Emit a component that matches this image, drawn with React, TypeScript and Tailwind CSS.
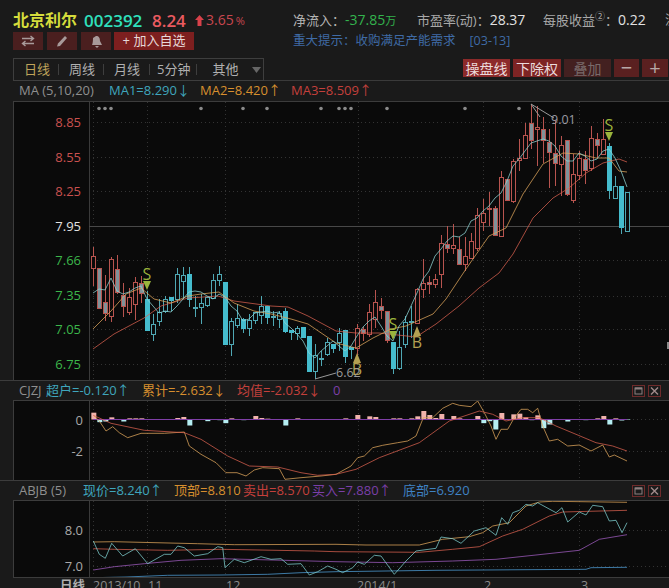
const Z = (a: number[], ox: number, oy: number) => {
  const r: string[] = [];
  for (let i = 0; i < a.length; i += 2) r.push(`${(ox + a[i] / 3).toFixed(1)},${(oy + a[i + 1] / 3).toFixed(1)}`);
  return r.join(" ");
};
const P = (a: number[]) => Z(a.map((v) => v * 3), 0, 0);

type C = [string, number, number, number, number];
const candles: C[] = [
  ["r", 246, 255, 267, 285], ["g", 267, 267, 307, 308], ["g", 274, 301, 312, 320], ["r", 256, 258, 315, 321], ["g", 254, 268, 291, 293],
  ["g", 282, 294, 305, 316], ["r", 287, 296, 311, 314], ["r", 276, 281, 303, 319], ["g", 275, 282, 292, 302], ["c", 290, 298, 329, 329],
  ["h", 313, 323, 333, 340], ["h", 298, 311, 320, 325], ["h", 295, 298, 310, 312], ["c", 296, 296, 299, 310], ["h", 267, 273, 298, 302],
  ["h", 266, 274, 280, 298], ["c", 266, 273, 298, 306], ["h", 295, 306, 307, 316], ["h", 293, 302, 306, 323], ["h", 296, 296, 304, 306],
  ["h", 273, 279, 297, 298], ["h", 265, 273, 279, 285], ["c", 281, 281, 343, 343], ["h", 317, 320, 343, 355], ["h", 303, 317, 324, 327],
  ["c", 317, 318, 327, 332], ["h", 313, 319, 327, 335], ["h", 311, 311, 319, 323], ["h", 295, 305, 314, 323], ["c", 305, 305, 316, 323],
  ["h", 310, 315, 315, 325], ["h", 310, 312, 318, 327], ["c", 307, 310, 330, 332], ["c", 329, 329, 331, 339], ["h", 325, 327, 332, 339],
  ["c", 326, 326, 336, 336], ["c", 335, 335, 370, 370], ["h", 343, 354, 370, 378], ["h", 350, 357, 358, 365], ["h", 337, 341, 353, 355],
  ["c", 343, 343, 347, 352], ["h", 327, 332, 341, 350], ["c", 329, 329, 355, 362], ["c", 346, 346, 348, 358], ["r", 323, 327, 347, 357],
  ["g", 326, 328, 332, 340], ["r", 303, 311, 333, 336], ["r", 289, 301, 318, 327], ["g", 297, 305, 309, 318], ["g", 310, 310, 339, 342],
  ["c", 341, 341, 367, 373], ["h", 330, 346, 367, 369], ["h", 315, 321, 343, 347], ["h", 305, 320, 320, 337], ["r", 287, 288, 322, 323],
  ["r", 258, 282, 288, 297], ["g", 275, 281, 283, 293], ["r", 273, 278, 283, 287], ["r", 234, 242, 273, 287], ["g", 225, 243, 247, 252],
  ["r", 223, 244, 247, 253], ["g", 236, 248, 263, 264], ["r", 236, 255, 263, 270], ["r", 232, 240, 257, 258], ["r", 207, 214, 247, 250],
  ["r", 198, 212, 221, 230], ["r", 191, 207, 208, 225], ["g", 205, 207, 234, 235], ["r", 170, 176, 235, 236], ["g", 178, 178, 199, 200],
  ["r", 158, 160, 200, 202], ["r", 138, 157, 159, 170], ["r", 122, 134, 157, 158], ["g", 103, 122, 139, 148], ["r", 105, 126, 128, 165],
  ["g", 116, 128, 139, 162], ["g", 128, 141, 151, 187], ["g", 119, 152, 162, 185], ["r", 135, 144, 163, 195], ["g", 139, 139, 193, 195],
  ["r", 153, 173, 199, 202], ["r", 150, 157, 174, 179], ["g", 150, 158, 169, 183], ["r", 125, 137, 167, 170], ["g", 132, 138, 144, 157],
  ["r", 118, 138, 153, 154], ["c", 142, 145, 189, 198], ["h", 175, 185, 197, 197], ["c", 185, 185, 226, 233], ["h", 191, 191, 230, 230],
];

const ma1 = [92,292,98,288,104,289,110,277,116,290,122,293,128,291,134,287,140,285,146,298,152,305,158,312,164,310,170,311,176,305,182,298,188,291,194,290,200,291,206,295,212,298,218,293,224,296,230,305,236,310,242,320,248,318,254,312,260,311,266,310,272,312,278,311,284,322,290,327,296,333,302,340,308,352,314,357,320,350,326,345,332,340,338,345,344,350,350,345,356,335,362,326,368,320,374,316,380,325,386,335,392,340,398,325,404,318,410,305,416,292,422,278,428,270,434,255,440,248,446,240,452,235,458,236,464,232,470,220,476,217,482,210,488,205,494,197,500,192,506,180,512,165,518,158,524,150,530,142,536,140,542,138,548,140,554,145,560,155,566,160,572,160,578,152,584,155,590,160,596,158,602,150,608,148,614,157,620,170,626,186];
const ma2 = [92,328,110,310,125,293,140,287,153,298,170,302,187,295,200,293,218,291,233,302,253,310,270,313,290,318,307,323,335,342,355,347,372,337,390,328,405,325,432,313,445,298,465,268,488,235,505,227,522,193,542,163,562,152,578,153,595,157,608,157,618,170,626,171];
const ma3 = [92,348,113,333,143,317,160,305,187,297,217,295,233,300,270,305,287,306,307,315,335,330,355,332,378,332,415,336,435,323,458,305,478,287,498,272,512,253,532,217,552,197,568,187,585,172,602,162,618,158,626,161];

const cjO = Z([277,118,295,135,315,165,335,152,355,170,380,185,420,172,450,172,490,172,550,168,565,210,600,235,645,260,675,290,708,290,735,300,760,282,785,275,835,278,852,310,900,305,960,300,1005,295],0,375) + " " + Z([45,270,65,245,85,240,110,215,140,208,185,200,215,195,240,180,262,125,290,125,320,97,350,82,370,88,405,92,425,75,445,110,465,150,480,190,495,160,515,160,535,125,555,100,575,100,590,110,605,97,620,150,640,195,665,190,695,210,730,207,765,225,800,207,820,243,835,237,873,255],335,375);
const cjR = Z([277,118,330,142,430,163,550,170,600,190,680,240,745,270,830,273,900,290,950,298,1005,295],0,375) + " " + Z([60,280,130,245,250,200,340,135,430,105,470,115,510,135,560,125,610,125,660,150,720,175,780,200,830,210,873,225],335,375);

const barsL: [number, number][] = [[277,110],[295,140],[313,138],[331,124],[367,138],[385,127],[403,127],[421,127],[457,132],[493,132],[529,126],[547,123],[565,150],[583,133],[601,133],[619,137],[637,132],[655,134],[673,143],[691,127],[727,134],[763,120],[781,126],[799,128],[853,150],[889,127],[925,132]];
const barsR: [number, number][] = [[28,127],[64,117],[100,121],[118,123],[172,127],[190,127],[226,127],[244,121],[262,105],[280,117],[298,126],[316,114],[352,120],[370,127],[424,120],[442,143],[460,137],[478,162],[496,111],[514,133],[532,115],[550,113],[568,124],[586,134],[604,118],[622,158],[640,147],[658,132],[676,132],[694,138],[748,134],[766,132],[784,127],[802,120],[820,147],[838,127],[856,135],[874,132]];

const abO = Z([277,498,340,497,590,503,700,506,1005,505],0,375) + " " + Z([90,507,250,507,320,490,400,482,440,470,470,450,520,440,570,390,610,378,650,376,873,379],335,375);
const abR = Z([277,518,340,520,500,523,660,520,940,525,1005,527],0,375) + " " + Z([250,529,350,520,430,512,500,480,560,460,640,420,680,408,873,403],335,375);
const abP = Z([277,582,340,572,430,563,540,553,660,548,850,553,1005,557],0,375) + " " + Z([170,560,350,555,480,550,600,537,730,523,790,490,873,476],335,375);
const abB = Z([277,605,375,603,500,598,660,597,800,595,900,590,1005,587],0,375) + " " + Z([300,583,750,580,765,575,873,574],335,375);
const abC = Z([277,495,295,535,313,547,332,502,365,540,403,518,440,563,490,535,510,535,530,510,550,515,580,540,620,533,650,512,665,515,672,575,700,550,730,560,780,542,810,550,840,548,860,565,900,563,925,597,950,587,980,570,1005,580],0,375) + " " + Z([20,590,50,575,65,558,85,565,115,538,135,540,175,595,210,555,240,525,300,517,315,483,350,488,375,502,415,465,450,455,480,478,497,425,515,445,530,410,550,403,570,385,590,390,605,380,660,410,678,395,695,438,730,408,750,417,770,388,800,392,820,435,840,433,858,470,873,440],335,375);

const vx = [92, 146, 224, 357, 482, 578];
const font = { fontFamily: "'Open Sans','Noto Sans CJK SC',sans-serif" };
const BG = "#0a0a0a";

function VGrid({ y1, y2 }: { y1: number; y2: number }) {
  return <>{vx.map((x) => <line key={x} x1={x + 0.5} x2={x + 0.5} y1={y1} y2={y2} stroke="#333" strokeDasharray="1 3" />)}</>;
}
function HGrid({ ys }: { ys: number[] }) {
  return <>{ys.map((y) => <line key={y} x1={92} x2={669} y1={y} y2={y} stroke="#333" strokeDasharray="1 3" />)}</>;
}
function Label({ x, y, c, t, size = 13 }: { x: number; y: number; c: string; t: string; size?: number }) {
  return <text x={x} y={y} fill={c} fontSize={size} textAnchor="end" style={font}>{t}</text>;
}
function Line({ p, c }: { p: string; c: string }) {
  return <polyline points={p} fill="none" stroke={c} strokeWidth={0.75} />;
}
function Mark({ x, y, t, up }: { x: number; y: number; t: string; up?: boolean }) {
  const c = up ? "#b3a052" : "#9ab43c";
  return (
    <g>
      <text x={x} y={up ? y + 17 : y - 5} fill={c} fontSize={16} textAnchor="middle" style={font}>{t}</text>
      <polygon points={up ? `${x - 4},${y + 5} ${x + 4},${y + 5} ${x},${y - 5}` : `${x - 4},${y - 4} ${x + 4},${y - 4} ${x},${y + 5}`} fill={c} />
    </g>
  );
}

function Candles() {
  return (
    <>
      {candles.map(([t, h, a, b, l], i) => {
        const x = 92 + 6 * i + 0.5;
        const s = t === "r" || t === "g" ? "#b8544f" : "#4fa8b4";
        const f = t === "g" ? "#7f9299" : t === "c" ? "#45bccd" : BG;
        return (
          <g key={i}>
            <line x1={x} x2={x} y1={h} y2={l} stroke={s} />
            <rect x={x - 2} y={a + 0.5} width={4} height={Math.max(b - a, 1)} fill={f} stroke={t === "c" ? f : s} />
          </g>
        );
      })}
    </>
  );
}

function Btn({ w, cls = "", children }: { w: string; cls?: string; children: React.ReactNode }) {
  return <div className={`${w} h-[18px] flex items-center justify-center text-[14px] ${cls}`}>{children}</div>;
}
function Sep({ cls }: { cls: string }) {
  return <div className={`w-px h-[11px] bg-[#3e3e3e] ${cls}`} />;
}

function WinIcons() {
  return (
    <div className="flex gap-[3px] mr-[8px]">
      <svg width="13" height="12" viewBox="0 0 13 12"><rect x="0.5" y="0.5" width="12" height="11" fill="none" stroke="#6e2b2b" /><rect x="3" y="3" width="7" height="6" fill="none" stroke="#8d8080" strokeWidth="1" /><line x1="3" x2="10" y1="3.5" y2="3.5" stroke="#8d8080" strokeWidth="2" /></svg>
      <svg width="13" height="12" viewBox="0 0 13 12"><rect x="0.5" y="0.5" width="12" height="11" fill="none" stroke="#6e2b2b" /><path d="M3 2.5 L10 9.5 M10 2.5 L3 9.5" stroke="#a08a8a" strokeWidth="1.4" /></svg>
    </div>
  );
}

export default function App() {
  return (
    <div className="w-[669px] h-[588px] overflow-hidden bg-[#1a1a1a] relative" style={font}>
      <div className="h-[31px] pt-[9px] pl-[13px] flex items-center whitespace-nowrap">
        <span className="shrink-0 w-[71px] text-[16px] font-bold text-[#d5dc3c] leading-none">北京利尔</span>
        <span className="shrink-0 w-[68px] text-[17px] font-semibold text-[#2fe0bd] leading-none">002392</span>
        <span className="shrink-0 w-[43px] text-[17px] font-semibold text-[#ea5a60] leading-none">8.24</span>
        <svg width="9" height="11" viewBox="0 0 9 11" className="shrink-0 mr-[2px]"><path d="M4.5 0 L9 5 H6.5 V11 H2.5 V5 H0 Z" fill="#d8414a" /></svg>
        <span className="shrink-0 w-[49px] text-[14px] text-[#c9474f] leading-none">3.65<span className="text-[11px] ml-[2px]">%</span></span>
        <span className="shrink-0 ml-[38px] text-[13px] text-[#b4b4b4] w-[124px]">净流入：<span className="text-[#33b34d] text-[14px]">-37.85<span className="text-[11px]">万</span></span></span>
        <span className="shrink-0 text-[13px] text-[#a8a8a8] w-[126px]">市盈率(动)：<span className="text-[#e2e2e2] text-[14px]">28.37</span></span>
        <span className="shrink-0 text-[13px] text-[#a8a8a8] w-[122px]">每股收益<sup className="text-[10px]">②</sup>：<span className="text-[#e2e2e2] text-[14px]">0.22</span></span>
        <span className="shrink-0 text-[13px] text-[#a8a8a8]">流</span>
      </div>
      <div className="h-[20px] pl-[13px] flex items-center gap-[4px] whitespace-nowrap">
        <div className="w-[30px] h-[18px] bg-[#4a1f1f] flex items-center justify-center">
          <svg width="14" height="12" viewBox="0 0 14 12" fill="none" stroke="#a89a9a" strokeWidth="1.4"><path d="M1 3.5H12M9.5 1 L12.5 3.5 L9.5 6M13 8.5H2M4.5 6 L1.5 8.5 L4.5 11" /></svg>
        </div>
        <div className="w-[30px] h-[18px] bg-[#4a1f1f] flex items-center justify-center">
          <svg width="12" height="12" viewBox="0 0 12 12"><path d="M9 1 L11 3 L4 11 L1 11.5 L2 8.5 Z" fill="#a89a9a" /></svg>
        </div>
        <div className="w-[30px] h-[18px] bg-[#4a1f1f] flex items-center justify-center">
          <svg width="13" height="13" viewBox="0 0 13 13"><path d="M6 1 C9 1 10 3 10 6 L12 10 H2 C3 8 3 4 3 3 Z M5 11 H9 L7 13 Z" fill="#a89a9a" /></svg>
        </div>
        <div className="w-[80px] h-[18px] bg-[#7d1f1f] -ml-[1px] flex items-center justify-center text-[13px] text-[#e6d8d8]">+ 加入自选</div>
        <span className="ml-[95px] text-[12.5px] text-[#3f6ba6]">重大提示：收购满足产能需求</span>
        <span className="ml-[10px] text-[12.5px] text-[#3f6ba6]">[03-13]</span>
      </div>
      <div className="h-[30px] pl-[13px] pt-[7px] flex items-start whitespace-nowrap">
        <div className="w-[251px] h-[23px] border border-[#3e3e3e] flex items-center text-[13px] text-[#b0b0b0]">
          <span className="ml-[10px] text-[#bfa35a]">日线</span>
          <Sep cls="ml-[8px] mr-[10px]" />
          <span>周线</span>
          <Sep cls="ml-[8px] mr-[10px]" />
          <span>月线</span>
          <Sep cls="ml-[9px] mr-[7px]" />
          <span>5分钟</span>
          <Sep cls="ml-[6px] mr-[15px]" />
          <span>其他</span>
          <svg width="9" height="6" viewBox="0 0 9 6" className="ml-[13px]"><path d="M0 0H9L4.5 6Z" fill="#666" /></svg>
        </div>
        <div className="flex-1 h-[23px] border-b border-[#3a3a3a] flex items-start pl-[199px] pt-[1px] gap-[3px]">
          <Btn w="w-[47px]" cls="bg-[#8c2a2a] text-[#ecdcdc]">操盘线</Btn>
          <Btn w="w-[48px]" cls="bg-[#7d2424] text-[#ecdcdc]">下除权</Btn>
          <Btn w="w-[47px]" cls="bg-[#432020] text-[#786a6a]">叠加</Btn>
          <Btn w="w-[25px]" cls="bg-[#5a2020] text-[#b8a8a8] text-[20px] leading-none">−</Btn>
          <Btn w="w-[26px]" cls="bg-[#5a2020] text-[#b8a8a8] text-[20px] leading-none">+</Btn>
        </div>
      </div>
      <div className="h-[20px] pl-[19px] flex items-center text-[13px] whitespace-nowrap">
        <span className="w-[90px] text-[#8f8f8f]">MA (5,10,20)</span>
        <span className="w-[91px] text-[#3fa6bd]">MA1=8.290↓</span>
        <span className="w-[91px] text-[#d78f2e]">MA2=8.420↑</span>
        <span className="text-[#c4403c]">MA3=8.509↑</span>
      </div>
      <div className="ml-[13px] h-[279px] border-t border-l border-[#3c3c3c] bg-[#0a0a0a]">
        <svg width="656" height="279" viewBox="13 101 656 279" className="block">
          <line x1={88.5} x2={88.5} y1={101} y2={380} stroke="#3a3a3a" />
          <VGrid y1={101} y2={380} />
          <HGrid ys={[121.5, 156.5, 190.5, 259.5, 295.5, 328.5, 363.5]} />
          <line x1={88} x2={669} y1={225.5} y2={225.5} stroke="#484848" />
          {[98, 104, 110, 200, 242, 266, 320, 338, 344, 350, 386, 464, 518].map((x) => <circle key={x} cx={x} cy={107.5} r={1.8} fill="#8a8a8a" />)}
          <Label x={80} y={126} c="#c9514f" t="8.85" />
          <Label x={80} y={161} c="#c9514f" t="8.55" />
          <Label x={80} y={195} c="#c9514f" t="8.25" />
          <Label x={80} y={230} c="#e2e2e2" t="7.95" />
          <Label x={80} y={264} c="#3cb64a" t="7.66" />
          <Label x={80} y={299} c="#3cb64a" t="7.35" />
          <Label x={80} y={333} c="#3cb64a" t="7.05" />
          <Label x={80} y={368} c="#3cb64a" t="6.75" />
          <Candles />
          <Line p={P(ma3)} c="#d8604f" />
          <Line p={P(ma2)} c="#e0a75c" />
          <Line p={P(ma1)} c="#8fd6d6" />
          <Mark x={146} y={284} t="S" />
          <Mark x={392} y={334} t="S" />
          <Mark x={608} y={135} t="S" />
          <Mark x={356} y={357} t="B" up />
          <Mark x={416} y={330} t="B" up />
          <polyline points="314,378 335,372" fill="none" stroke="#9a9a9a" />
          <polyline points="530,103 553,117" fill="none" stroke="#9a9a9a" />
          <polyline points="530,103 539,116" fill="none" stroke="#9a9a9a" />
          <text x={550} y={123} fill="#9a9aa2" fontSize={12.5} style={font}>9.01</text>
          <text x={335} y={376} fill="#9a9a9a" fontSize={12.5} style={font}>6.62</text>
          <rect x={666} y={341} width={3} height={7} fill="#8a8a8a" />
        </svg>
      </div>
      <div className="h-[20px] pl-[19px] flex items-center text-[13px] whitespace-nowrap border-t border-[#3c3c3c]">
        <span className="w-[27px] text-[#8f8f8f]">CJZJ</span>
        <span className="w-[96px] text-[#3fa6bd]">超户=-0.120↑</span>
        <span className="w-[95px] text-[#d78f2e]">累计=-2.632↓</span>
        <span className="w-[96px] text-[#c4403c]">均值=-2.032↓</span>
        <span className="text-[#7a3fa8] flex-1">0</span>
        <WinIcons />
      </div>
      <div className="ml-[13px] h-[80px] border-t border-l border-[#3c3c3c] bg-[#0a0a0a]">
        <svg width="656" height="80" viewBox="13 400 656 80" className="block">
          <line x1={88.5} x2={88.5} y1={400} y2={480} stroke="#3a3a3a" />
          <VGrid y1={400} y2={480} />
          <HGrid ys={[418.5, 450.5]} />
          <Label x={82} y={424} c="#a8a8a8" t="0" />
          <Label x={82} y={455} c="#a8a8a8" t="-2" />
          {barsL.map(([x, y]) => <rect key={x} x={x / 3 - 2} y={Math.min(418, 375 + y / 3)} width={5} height={Math.abs(375 + y / 3 - 418.5)} fill={y < 130 ? "#f0b3ac" : "#b5eef2"} />)}
          {barsR.map(([x, y]) => <rect key={x} x={335 + x / 3 - 2} y={Math.min(418, 375 + y / 3)} width={5} height={Math.abs(375 + y / 3 - 418.5)} fill={y < 130 ? "#f0b3ac" : "#b5eef2"} />)}
          <line x1={92} x2={626} y1={418.5} y2={418.5} stroke="#7f3fa6" />
          <Line p={cjO} c="#e0a75c" />
          <Line p={cjR} c="#d8604f" />
        </svg>
      </div>
      <div className="h-[20px] pl-[19px] flex items-center text-[13px] whitespace-nowrap border-t border-[#3c3c3c]">
        <span className="w-[64px] text-[#8f8f8f]">ABJB (5)</span>
        <span className="w-[91px] text-[#3fa6bd]">现价=8.240↑</span>
        <span className="w-[69px] text-[#d78f2e]">顶部=8.810</span>
        <span className="w-[69px] text-[#c4403c]">卖出=8.570</span>
        <span className="w-[91px] text-[#7a3fa8]">买入=7.880↑</span>
        <span className="text-[#3f82c4] flex-1">底部=6.920</span>
        <WinIcons />
      </div>
      <div className="ml-[13px] h-[78px] border-t border-b border-l border-[#3c3c3c] bg-[#0a0a0a]">
        <svg width="656" height="76" viewBox="13 500 656 76" className="block">
          <line x1={88.5} x2={88.5} y1={500} y2={577} stroke="#3a3a3a" />
          <VGrid y1={500} y2={577} />
          <HGrid ys={[529.5, 565.5]} />
          <Label x={82} y={534} c="#a8a8a8" t="8.0" />
          <Label x={82} y={570} c="#a8a8a8" t="7.0" />
          <Line p={abB} c="#4f9fd8" />
          <Line p={abP} c="#a05cc0" />
          <Line p={abR} c="#d8604f" />
          <Line p={abO} c="#e0a75c" />
          <Line p={abC} c="#7fd0d0" />
        </svg>
      </div>
      <div className="relative h-[12px] text-[12.5px] text-[#8a8a8a] whitespace-nowrap leading-[16px]">
        <span className="absolute left-[60px] top-0 font-bold text-[#b0b0b0]">日线</span>
        <span className="absolute left-[93px] top-0">2013/10</span>
        <span className="absolute left-[148px] top-0">11</span>
        <span className="absolute left-[226px] top-0">12</span>
        <span className="absolute left-[357px] top-0">2014/1</span>
        <span className="absolute left-[484px] top-0">2</span>
        <span className="absolute left-[581px] top-0">3</span>
      </div>
    </div>
  );
}
